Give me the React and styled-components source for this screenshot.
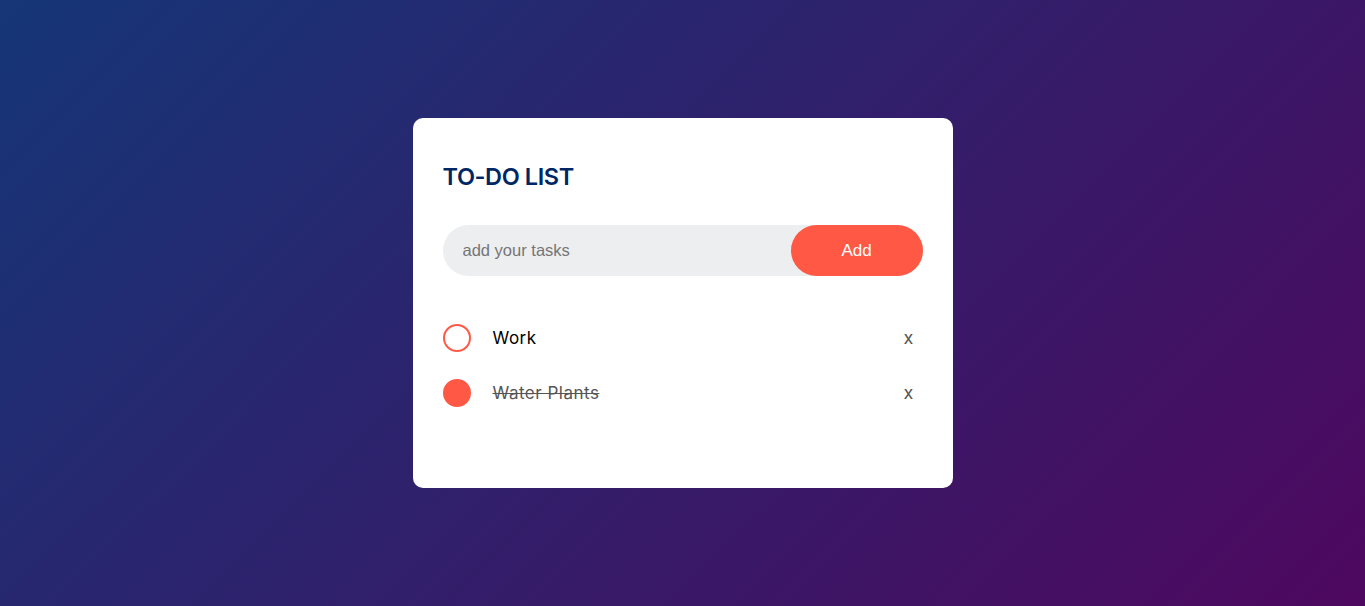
import React, { useState } from 'react';
import styled, { createGlobalStyle } from 'styled-components';

const GlobalStyle = createGlobalStyle`
  * {
    margin: 0;
    padding: 0;
    box-sizing: border-box;
  }
  html, body, #root {
    height: 100%;
  }
  body {
    font-family: Inter, "Noto Sans", sans-serif;
  }
`;

const Page = styled.div`
  width: 100%;
  min-height: 100vh;
  background: linear-gradient(135deg, #153677, #4e085f);
  padding-top: 118px;
`;

const Card = styled.div`
  width: 540px;
  margin: 0 auto;
  background: #fff;
  border-radius: 10px;
  padding: 41px 30px 68px;
`;

const Title = styled.h2`
  color: #002765;
  font-size: 23.5px;
  font-weight: 600;
  line-height: 36px;
  letter-spacing: -0.4px;
  margin-bottom: 30px;
`;

const InputRow = styled.div`
  display: flex;
  align-items: center;
  justify-content: space-between;
  background: #edeef0;
  border-radius: 30px;
  padding-left: 20px;
  margin-bottom: 34px;
`;

const TaskInput = styled.input`
  flex: 1;
  min-width: 0;
  border: none;
  outline: none;
  background: transparent;
  padding: 10px 0;
  font-family: "Liberation Sans", Arial, sans-serif;
  font-size: 16.5px;
  color: #333;
  &::placeholder {
    color: #757575;
  }
`;

const AddButton = styled.button`
  flex: none;
  width: 132px;
  border: none;
  outline: none;
  padding: 16px 0;
  background: #ff5945;
  color: #fff;
  font-family: "Liberation Sans", Arial, sans-serif;
  font-size: 17px;
  line-height: 19px;
  border-radius: 40px;
  cursor: pointer;
`;

const List = styled.ul`
  list-style: none;
`;

const Item = styled.li`
  display: flex;
  align-items: center;
  height: 55px;
  font-size: 17px;
  cursor: pointer;
  user-select: none;
`;

const Check = styled.span`
  flex: none;
  width: 28px;
  height: 28px;
  border-radius: 50%;
  border: 2px solid #ff5945;
  background: ${(p) => (p.$done ? '#ff5945' : 'transparent')};
  margin-right: 22px;
`;

const Label = styled.span`
  flex: 1;
  letter-spacing: 0.5px;
  color: ${(p) => (p.$done ? '#555' : '#000')};
  text-decoration: ${(p) => (p.$done ? 'line-through' : 'none')};
`;

const Remove = styled.span`
  width: 40px;
  margin-right: -6px;
  text-align: center;
  font-size: 18px;
  line-height: 40px;
  color: #555;
`;

export default function App() {
  const [tasks, setTasks] = useState([
    { id: 1, text: 'Work', done: false },
    { id: 2, text: 'Water Plants', done: true },
  ]);
  const [value, setValue] = useState('');

  const addTask = () => {
    if (!value.trim()) return;
    setTasks([...tasks, { id: Date.now(), text: value, done: false }]);
    setValue('');
  };

  const toggle = (id) =>
    setTasks(tasks.map((t) => (t.id === id ? { ...t, done: !t.done } : t)));

  const remove = (id) => setTasks(tasks.filter((t) => t.id !== id));

  return (
    <Page>
      <GlobalStyle />
      <Card>
        <Title>TO-DO LIST</Title>
        <InputRow>
          <TaskInput
            placeholder="add your tasks"
            value={value}
            onChange={(e) => setValue(e.target.value)}
          />
          <AddButton onClick={addTask}>Add</AddButton>
        </InputRow>
        <List>
          {tasks.map((t) => (
            <Item key={t.id} onClick={() => toggle(t.id)}>
              <Check $done={t.done} />
              <Label $done={t.done}>{t.text}</Label>
              <Remove
                onClick={(e) => {
                  e.stopPropagation();
                  remove(t.id);
                }}
              >
                x
              </Remove>
            </Item>
          ))}
        </List>
      </Card>
    </Page>
  );
}
